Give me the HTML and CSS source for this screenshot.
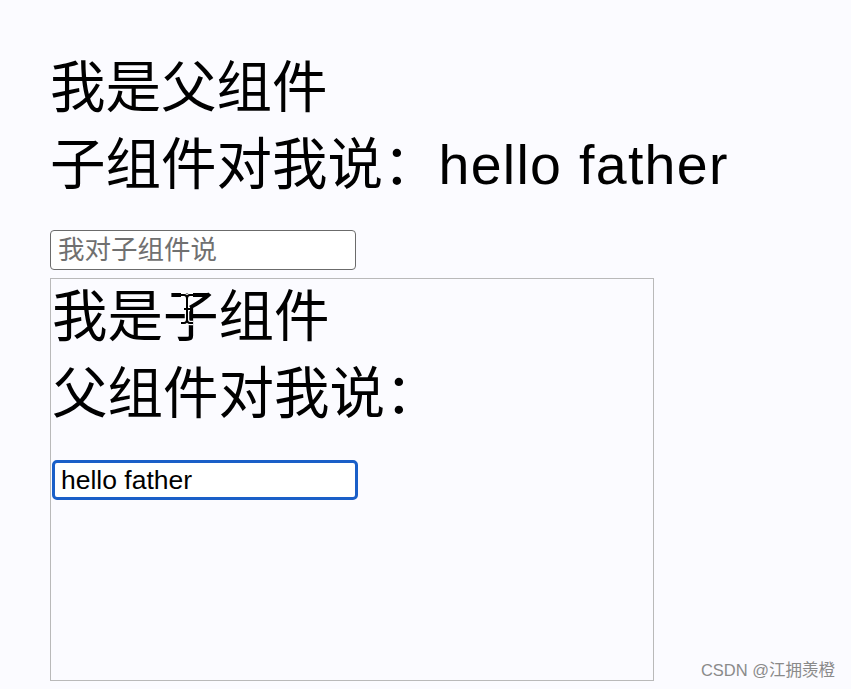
FILE: index.html
```html
<!DOCTYPE html>
<html lang="zh">
<head>
    <meta charset="UTF-8">
    <title>父子组件通信</title>
    <link rel="stylesheet" href="styles.css">
</head>
<body>
    <div class="father">
        <div class="line">我是父组件</div>
        <div class="line">子组件对我说：<span class="latin">hello father</span></div>
        <input class="say" type="text" placeholder="我对子组件说">
        <div class="child">
            <div class="line">我是子组件</div>
            <div class="line">父组件对我说：</div>
            <input class="say focus" type="text" value="hello father">
        </div>
    </div>
    <svg class="cursor" width="18" height="34" viewBox="0 0 18 34">
        <path d="M3 3h3c2 0 3 2 3 4v20c0 2-1 4-3 4H3M15 3h-3c-2 0-3 2-3 4M9 27c0 2 1 4 3 4h3M6 17h6" fill="none" stroke="#fff" stroke-width="4.5"/>
        <path d="M3 3h3c2 0 3 2 3 4v20c0 2-1 4-3 4H3M15 3h-3c-2 0-3 2-3 4M9 27c0 2 1 4 3 4h3M6 17h6" fill="none" stroke="#000" stroke-width="2"/>
    </svg>
    <div class="mark">CSDN @江拥羡橙</div>
</body>
</html>
```

FILE: styles.css
```css
body { margin: 0; padding: 50px 0 0 50px; background: #fbfbff; font-family: "Liberation Sans", "Noto Sans CJK SC", sans-serif; color: #000; height: 689px; box-sizing: border-box; overflow: hidden; }
.line { font-size: 55.5px; line-height: 77px; height: 77px; white-space: nowrap; }
.latin { letter-spacing: 1.3px; }
.father { display: flex; flex-direction: column; align-items: flex-start; }
.say { width: 306px; height: 40px; box-sizing: border-box; margin: 26px 0 8px; padding: 0 7px; border: 1.5px solid #6b6b6b; border-radius: 4px; background: #fff; font-family: "Liberation Sans", "Noto Sans CJK SC", sans-serif; font-size: 26.5px; color: #000; outline: none; }
.say::placeholder { color: #707070; }
.child { width: 604px; height: 403px; box-sizing: border-box; border: 1px solid #b9b9b9; padding-left: 1px; display: flex; flex-direction: column; align-items: flex-start; }
.child .say { margin: 27px 0 0; border: 3px solid #1a5fc8; border-radius: 5px; padding: 0 6px; }
.cursor { position: absolute; left: 178px; top: 292px; }
.mark { position: absolute; right: 16px; bottom: 8px; font-size: 16.5px; color: #8a8a8a; font-family: "Liberation Sans", "Noto Sans CJK SC", sans-serif; }
```
